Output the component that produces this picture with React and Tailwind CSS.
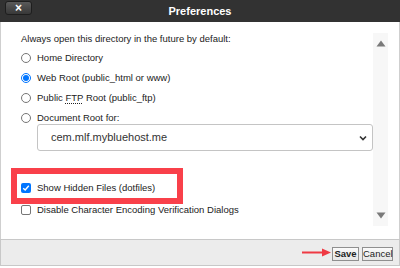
import React from "react";

const Radio = ({ checked }) => (
  <span
    className={`w-[10px] h-[10px] rounded-full border flex items-center justify-center bg-white ${
      checked ? "border-[#0075ff]" : "border-[#767676]"
    }`}
  >
    {checked && <span className="w-[6px] h-[6px] rounded-full bg-[#0075ff]"></span>}
  </span>
);

const Check = ({ checked }) =>
  checked ? (
    <span className="w-[10px] h-[10px] rounded-[2px] bg-[#0075ff] flex items-center justify-center">
      <svg width="8" height="8" viewBox="0 0 8 8">
        <path d="M1.2 4.2 L3.2 6 L6.8 1.8" fill="none" stroke="white" strokeWidth="1.4" />
      </svg>
    </span>
  ) : (
    <span className="w-[10px] h-[10px] rounded-[2px] border border-[#767676] bg-white"></span>
  );

export default function App() {
  return (
    <div className="w-[400px] h-[268px] bg-white relative font-['Liberation_Sans',Arial,sans-serif] text-[#222] overflow-hidden">
      {/* Title bar */}
      <div className="h-[22px] bg-[#323232] relative flex items-center justify-center">
        <div className="absolute left-[5px] top-[1px] w-[27px] h-[14px] rounded-[3px] border border-[#1e1e1e] bg-gradient-to-b from-[#5a5a5a] to-[#383838] flex items-center justify-center text-white text-[12px] font-bold leading-none">
          ×
        </div>
        <span className="text-white text-[11px] font-bold">Preferences</span>
      </div>

      {/* Body */}
      <div className="h-[217px] border-x border-[#cfcfcf] flex pl-[20px] pr-[11px] pt-[11px]">
        <div className="flex-1 flex flex-col text-[9.5px]">
          <div className="h-[12px] leading-[12px]">Always open this directory in the future by default:</div>
          <div className="mt-[7px] flex flex-col gap-[8px]">
            <div className="h-[12px] flex items-center gap-[6px]">
              <Radio />
              <span>Home Directory</span>
            </div>
            <div className="h-[12px] flex items-center gap-[6px]">
              <Radio checked />
              <span>Web Root (public_html or www)</span>
            </div>
            <div className="h-[12px] flex items-center gap-[6px]">
              <Radio />
              <span>
                Public <abbr className="underline decoration-dotted underline-offset-2 no-underline-none">FTP</abbr> Root (public_ftp)
              </span>
            </div>
            <div className="h-[12px] flex items-center gap-[6px]">
              <Radio />
              <span>Document Root for:</span>
            </div>
          </div>
          <div className="ml-[16px] h-[27px] border border-[#c4c4c4] rounded-[3px] flex items-center justify-between pl-[13px] pr-[4px] text-[11px] text-[#333]">
            <span>cem.mlf.mybluehost.me</span>
            <svg width="10" height="10" viewBox="0 0 10 10">
              <path d="M2 3.5 L5 6.5 L8 3.5" fill="none" stroke="#333" strokeWidth="1.6" />
            </svg>
          </div>
          <div className="mt-[31px] h-[12px] flex items-center gap-[6px]">
            <Check checked />
            <span>Show Hidden Files (dotfiles)</span>
          </div>
          <div className="mt-[10px] h-[12px] flex items-center gap-[6px]">
            <Check />
            <span>Disable Character Encoding Verification Dialogs</span>
          </div>
        </div>
        {/* Scrollbar */}
        <div className="w-[15px] h-[193px] bg-[#f7f7f7] flex flex-col items-center justify-between py-[7px]">
          <svg width="10" height="7" viewBox="0 0 10 7">
            <path d="M5 0.5 L9.5 6.5 L0.5 6.5 Z" fill="#7a7a7a" />
          </svg>
          <svg width="10" height="7" viewBox="0 0 10 7">
            <path d="M0.5 0.5 L9.5 0.5 L5 6.5 Z" fill="#7a7a7a" />
          </svg>
        </div>
      </div>

      {/* Footer */}
      <div className="h-[27px] bg-[#ececec] border border-[#c8c8c8] flex justify-end items-start pt-[7px] pr-[6px] gap-[3px] text-[9.5px]">
        <button className="w-[27px] h-[14px] border border-[#8f8f8f] bg-gradient-to-b from-[#fafafa] to-[#e6e6e6] font-bold leading-none text-[#222]">
          Save
        </button>
        <button className="w-[31px] h-[14px] border border-[#8f8f8f] bg-gradient-to-b from-[#fafafa] to-[#e6e6e6] leading-none text-[#222]">
          Cancel
        </button>
      </div>

      {/* Annotations */}
      <div className="absolute left-[11px] top-[168px] w-[172px] h-[36px] border-[6px] border-[#f9404a] pointer-events-none"></div>
      <svg className="absolute left-[302px] top-[248px]" width="30" height="9" viewBox="0 0 30 9">
        <path d="M0 4.5 L22 4.5" stroke="#ef3a44" strokeWidth="2" />
        <path d="M20 0.5 L29 4.5 L20 8.5 Z" fill="#ef3a44" />
      </svg>
    </div>
  );
}
